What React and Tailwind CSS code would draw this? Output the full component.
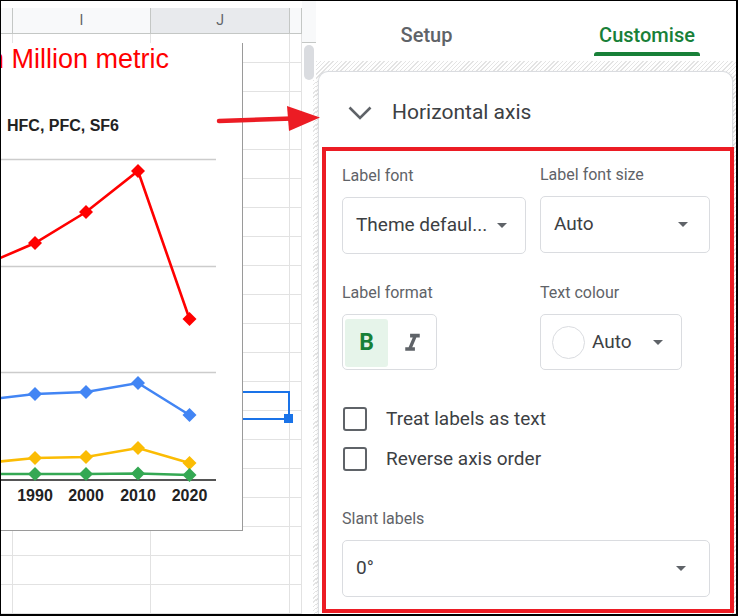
import React from "react";

const series = [
  { color: "#ff0000", pts: [[-16, 265], [35, 243], [86, 212], [138, 171], [189.5, 319]] },
  { color: "#4285f4", pts: [[-16, 400], [35, 394], [86, 392], [138, 383], [189.5, 415]] },
  { color: "#fbbc04", pts: [[-16, 463], [35, 458], [86, 457], [138, 448], [189.5, 463]] },
  { color: "#34a853", pts: [[-16, 474], [35, 474], [86, 474], [138, 473.5], [189.5, 475]] },
];

export default function App() {
  return (
    <div className="relative flex w-[738px] h-[616px] overflow-hidden bg-white border-black border-t border-l border-r-2 border-b-2 font-['Roboto',sans-serif]">
      <Sheet />
      <Panel />
      <Arrow />
    </div>
  );
}

function Sheet() {
  const rows = Array.from({ length: 20 });
  return (
    <div className="relative flex w-[315px] shrink-0">
      <div className="flex flex-col w-[301px]">
        <div className="h-[9px] bg-white" />
        <div className="flex h-[33px] border-b border-[#c4c7c5] text-[14px] text-[#5f6368] font-['Roboto',sans-serif]">
          <div className="w-[12px] border-r border-[#c4c7c5] bg-[#f8f9fa]" />
          <div className="w-[138px] flex items-center justify-center border-r border-[#c4c7c5] bg-[#f8f9fa]">I</div>
          <div className="w-[139px] flex items-center justify-center border-r border-[#c4c7c5] bg-[#e8eaed]">J</div>
          <div className="w-[12px] border-r border-[#c4c7c5] bg-[#f8f9fa]" />
        </div>
        {rows.map((_, i) => (
          <div key={i} className="flex h-[29px] shrink-0 border-b border-[#e2e2e2]">
            <div className="w-[12px] border-r border-[#e2e2e2]" />
            <div className="w-[138px] border-r border-[#e2e2e2]" />
            <div className="w-[139px] border-r border-[#e2e2e2]" />
            <div className="w-[12px] border-r border-[#e2e2e2]" />
          </div>
        ))}
      </div>

      {/* scrollbar */}
      <div className="w-[14px] flex flex-col">
        <div className="h-[42px] bg-[#f8f9fa] border-b border-[#c4c7c5]" />
        <div className="mt-[2px] ml-[2px] w-[10px] h-[35px] rounded-full bg-[#dadce0]" />
        <div className="flex-1 ml-auto w-[3px] bg-[repeating-linear-gradient(135deg,#e4e4e4_0_1px,#ffffff_1px_3px)]" />
      </div>

      {/* selected cell */}
      <div className="absolute left-[240px] top-[390px] w-[49px] h-[29px] border-t-2 border-r-2 border-b-2 border-[#1a73e8]" />
      <div className="absolute left-[283px] top-[413px] w-[9px] h-[9px] bg-[#1a73e8]" />

      <Chart />
    </div>
  );
}

function Chart() {
  const years = [
    ["1990", 35],
    ["2000", 86],
    ["2010", 138],
    ["2020", 189.5],
  ];
  return (
    <div className="absolute left-0 top-[42px] w-[242px] h-[488px] bg-white border-r border-b border-[#9a9a9a]">
      <svg width="241" height="487" viewBox="1 43 241 487" className="block font-['Liberation_Sans',Arial,sans-serif]">
        <text x="-17" y="68" fontSize="27" fill="#ff0000">in Million metric</text>
        <text x="7" y="131" fontSize="16" fontWeight="bold" fill="#222">HFC, PFC, SF6</text>
        {[159.5, 266.5, 372.5].map((y) => (
          <line key={y} x1="0" x2="216" y1={y} y2={y} stroke="#cccccc" strokeWidth="1.3" />
        ))}
        <line x1="0" x2="216" y1="480" y2="480" stroke="#555" strokeWidth="2" />
        {series.map((s) => (
          <g key={s.color}>
            <polyline
              points={s.pts.map((p) => p.join(",")).join(" ")}
              fill="none"
              stroke={s.color}
              strokeWidth="2.6"
            />
            {s.pts.map(([x, y]) => (
              <polygon
                key={x}
                points={`${x},${y - 7} ${x + 7},${y} ${x},${y + 7} ${x - 7},${y}`}
                fill={s.color}
              />
            ))}
          </g>
        ))}
        {years.map(([t, x]) => (
          <text key={t} x={x} y="501" fontSize="16" fontWeight="bold" fill="#222" textAnchor="middle">
            {t}
          </text>
        ))}
      </svg>
    </div>
  );
}

function Caret() {
  return <span className="w-0 h-0 border-l-[5px] border-r-[5px] border-t-[5px] border-l-transparent border-r-transparent border-t-[#5f6368]" />;
}

function Label({ children }) {
  return <div className="h-[20px] text-[16px] leading-[20px] text-[#5f6368]">{children}</div>;
}

function Select({ value, className, pr }) {
  return (
    <div className={`flex items-center justify-between h-[57px] pl-[13px] rounded-[5px] border border-[#dadce0] ${pr} ${className}`}>
      <span className="text-[19px] text-[#3c4043]">{value}</span>
      <Caret />
    </div>
  );
}

function Checkbox({ label }) {
  return (
    <div className="flex items-center h-[24px] gap-[19px] pl-px">
      <div className="w-[24px] h-[24px] rounded-[3px] border-2 border-[#5f6368]" />
      <span className="text-[19px] text-[#3c4043]">{label}</span>
    </div>
  );
}

function Panel() {
  return (
    <div className="flex-1 flex flex-col min-w-0 overflow-hidden">
      <div className="flex h-[60px] shrink-0 bg-white">
        <div className="w-[221px] shrink-0 flex justify-center pt-[22px] text-[20px] leading-[24px] font-medium text-[#5f6368]">
          Setup
        </div>
        <div className="relative w-[220px] shrink-0 flex justify-center pt-[22px] text-[20px] leading-[24px] font-medium text-[#188038]">
          Customise
          <div className="absolute top-[51px] left-[57px] w-[106px] h-[4px] rounded-t-[3px] bg-[#188038]" />
        </div>
      </div>

      <div className="flex-1 flex flex-col bg-[repeating-linear-gradient(135deg,#e4e4e4_0_1px,#ffffff_1px_3px)]">
        <div className="mt-[10px] ml-[2px] w-[415px] flex-1 rounded-t-[10px] border border-b-0 border-[#dadce0] bg-white shadow-[0_1px_3px_rgba(60,64,67,0.15)]">
          <div className="flex items-center h-[75px] pt-[7px] pl-[29px] gap-[20px]">
            <svg width="24" height="14" viewBox="0 0 24 14">
              <polyline points="1.5,1.5 12,12 22.5,1.5" fill="none" stroke="#5f6368" strokeWidth="2.6" />
            </svg>
            <span className="text-[21px] text-[#3c4043]">Horizontal axis</span>
          </div>

          <div className="ml-[3px] w-[412px] border-4 border-[#ec1c24] pl-[16px] pt-[15px] pb-[12px]">
            <div className="flex gap-[14px]">
              <div className="w-[184px]">
                <Label>Label font</Label>
                <Select value="Theme defaul..." pr="pr-[18px]" className="mt-[11px]" />
              </div>
              <div className="w-[170px] -mt-px">
                <Label>Label font size</Label>
                <Select value="Auto" pr="pr-[21px]" className="mt-[11px]" />
              </div>
            </div>

            <div className="flex gap-[14px] mt-[29px]">
              <div className="w-[184px]">
                <Label>Label format</Label>
                <div className="mt-[11px] flex items-center w-[95px] h-[56px] pl-[2px] pt-[2px] rounded-[5px] border border-[#dadce0]">
                  <div className="w-[43px] h-[48px] flex items-center justify-center rounded-[3px] bg-[#e6f4ea] text-[23px] font-bold text-[#188038]">
                    B
                  </div>
                  <div className="flex-1 flex items-center justify-center">
                    <svg width="29" height="29" viewBox="0 0 24 24">
                      <path d="M10 4v3h2.21l-3.42 8H6v3h8v-3h-2.21l3.42-8H18V4z" fill="#5f6368" />
                    </svg>
                  </div>
                </div>
              </div>
              <div className="w-[170px]">
                <Label>Text colour</Label>
                <div className="mt-[11px] flex items-center w-[142px] h-[56px] pl-[11px] rounded-[5px] border border-[#dadce0]">
                  <div className="w-[33px] h-[33px] rounded-full border border-[#dadce0] bg-white" />
                  <span className="ml-[7px] text-[19px] text-[#3c4043]">Auto</span>
                  <span className="ml-[21px] flex">
                    <Caret />
                  </span>
                </div>
              </div>
            </div>

            <div className="mt-[37px] flex flex-col gap-[16px]">
              <Checkbox label="Treat labels as text" />
              <Checkbox label="Reverse axis order" />
            </div>

            <div className="mt-[38px]">
              <Label>Slant labels</Label>
              <Select value="0°" pr="pr-[23px]" className="mt-[11px] w-[368px]" />
            </div>
          </div>
        </div>
      </div>
    </div>
  );
}

function Arrow() {
  return (
    <svg
      className="absolute left-0 top-0 pointer-events-none"
      width="737"
      height="615"
      viewBox="1 1 737 615"
    >
      <line x1="219" y1="121" x2="292" y2="118.5" stroke="#ec1c24" strokeWidth="4.5" strokeLinecap="round" />
      <polygon points="287,106 320,117.5 289,131" fill="#ec1c24" />
    </svg>
  );
}
